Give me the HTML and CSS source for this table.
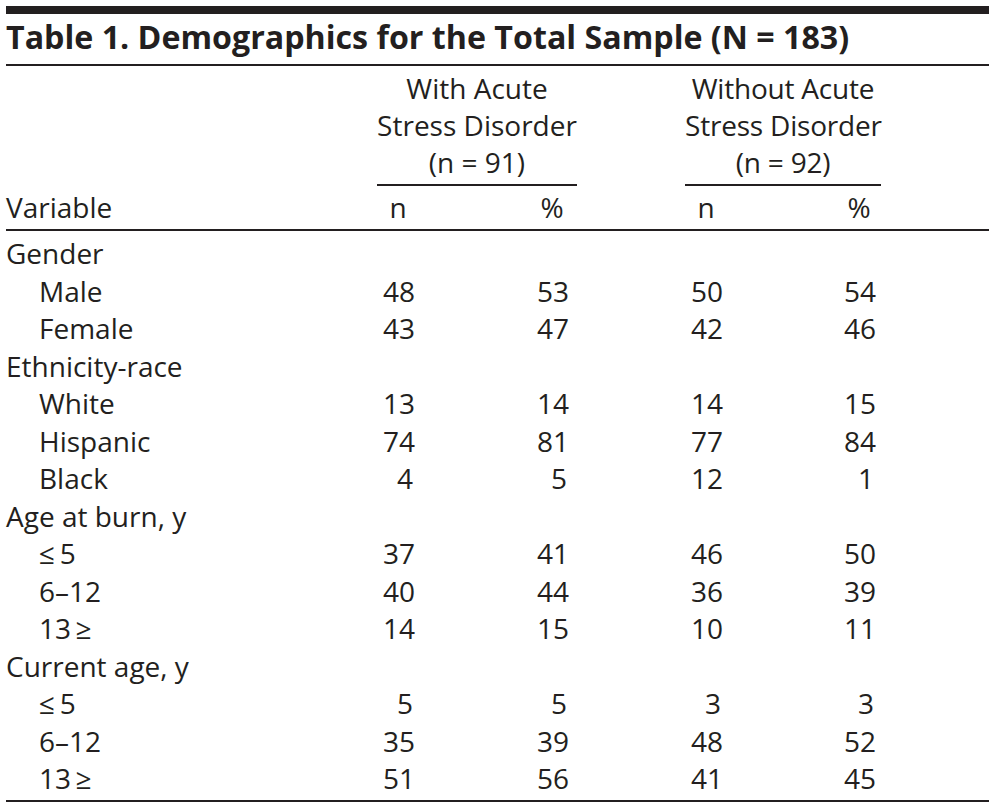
FILE: index.html
```html
<!DOCTYPE html>
<html lang="en">
<head>
<meta charset="utf-8">
<title>Table 1. Demographics for the Total Sample</title>
<link rel="stylesheet" href="styles.css">
</head>
<body>
<div class="table">
  <div class="title">Table 1. Demographics for the Total Sample (N = 183)</div>
  <div class="head">
    <div class="spanrow">
      <div class="grp-title g1">With Acute<br>Stress Disorder<br>(n = 91)</div>
      <div class="grp-title g2">Without Acute<br>Stress Disorder<br>(n = 92)</div>
    </div>
    <div class="row colrow">
      <div class="label">Variable</div>
      <div class="pair g1"><span class="box hd">n</span><span class="box hd">%</span></div>
      <div></div>
      <div class="pair g2"><span class="box hd">n</span><span class="box hd">%</span></div>
    </div>
  </div>
  <div class="body">
    <div class="row"><div class="label">Gender</div></div>
    <div class="row"><div class="label sub">Male</div><div class="pair g1"><span class="box">48</span><span class="box">53</span></div><div></div><div class="pair g2"><span class="box">50</span><span class="box">54</span></div></div>
    <div class="row"><div class="label sub">Female</div><div class="pair g1"><span class="box">43</span><span class="box">47</span></div><div></div><div class="pair g2"><span class="box">42</span><span class="box">46</span></div></div>
    <div class="row"><div class="label">Ethnicity-race</div></div>
    <div class="row"><div class="label sub">White</div><div class="pair g1"><span class="box">13</span><span class="box">14</span></div><div></div><div class="pair g2"><span class="box">14</span><span class="box">15</span></div></div>
    <div class="row"><div class="label sub">Hispanic</div><div class="pair g1"><span class="box">74</span><span class="box">81</span></div><div></div><div class="pair g2"><span class="box">77</span><span class="box">84</span></div></div>
    <div class="row"><div class="label sub">Black</div><div class="pair g1"><span class="box">4</span><span class="box">5</span></div><div></div><div class="pair g2"><span class="box">12</span><span class="box">1</span></div></div>
    <div class="row"><div class="label">Age at burn, y</div></div>
    <div class="row"><div class="label sub">≤&#8201;5</div><div class="pair g1"><span class="box">37</span><span class="box">41</span></div><div></div><div class="pair g2"><span class="box">46</span><span class="box">50</span></div></div>
    <div class="row"><div class="label sub">6–12</div><div class="pair g1"><span class="box">40</span><span class="box">44</span></div><div></div><div class="pair g2"><span class="box">36</span><span class="box">39</span></div></div>
    <div class="row"><div class="label sub">13&#8201;≥</div><div class="pair g1"><span class="box">14</span><span class="box">15</span></div><div></div><div class="pair g2"><span class="box">10</span><span class="box">11</span></div></div>
    <div class="row"><div class="label">Current age, y</div></div>
    <div class="row"><div class="label sub">≤&#8201;5</div><div class="pair g1"><span class="box">5</span><span class="box">5</span></div><div></div><div class="pair g2"><span class="box">3</span><span class="box">3</span></div></div>
    <div class="row"><div class="label sub">6–12</div><div class="pair g1"><span class="box">35</span><span class="box">39</span></div><div></div><div class="pair g2"><span class="box">48</span><span class="box">52</span></div></div>
    <div class="row"><div class="label sub">13&#8201;≥</div><div class="pair g1"><span class="box">51</span><span class="box">56</span></div><div></div><div class="pair g2"><span class="box">41</span><span class="box">45</span></div></div>
  </div>
</div>
</body>
</html>
```
FILE: styles.css
```css
html, body {
  margin: 0;
  padding: 0;
  background: #ffffff;
}

body {
  font-family: "Open Sans", "Noto Sans", "DejaVu Sans", sans-serif;
  font-size: 28px;
  color: #231f20;
}

.table {
  margin: 6px 0 0 6px;
  width: 983px;
  border-top: 8px solid #231f20;
  border-bottom: 2px solid #231f20;
}

.title {
  font-weight: 700;
  font-size: 32.2px;
  line-height: 46px;
  padding: 0 0 4px 0;
  border-bottom: 2px solid #231f20;
  white-space: nowrap;
}

.spanrow,
.row {
  display: grid;
  grid-template-columns: 371px 200px 108px 196px 108px;
}

.spanrow {
  padding-top: 3.5px;
}

.grp-title {
  text-align: center;
  line-height: 37px;
  padding-bottom: 3.5px;
  border-bottom: 2px solid #231f20;
  white-space: nowrap;
}

.grp-title.g1 {
  grid-column: 2;
}

.grp-title.g2 {
  grid-column: 4;
  letter-spacing: -0.2px;
}

.colrow {
  line-height: 37px;
  padding: 2.5px 0 3.5px;
  border-bottom: 2px solid #231f20;
}

.body {
  padding: 4px 0 2.5px;
}

.body .row {
  line-height: 37.5px;
  height: 37.5px;
}

.label {
  grid-column: 1;
  padding-left: 0;
  white-space: nowrap;
}

.label.sub {
  padding-left: 33px;
}

.pair {
  display: flex;
  justify-content: space-between;
}

.pair.g1 {
  grid-column: 2;
  padding: 0 10px 0 6px;
}

.pair.g2 {
  grid-column: 4;
  padding: 0 7px 0 6px;
}

.box {
  width: 30px;
  text-align: right;
  white-space: nowrap;
}

.box.hd {
  text-align: center;
}
```
